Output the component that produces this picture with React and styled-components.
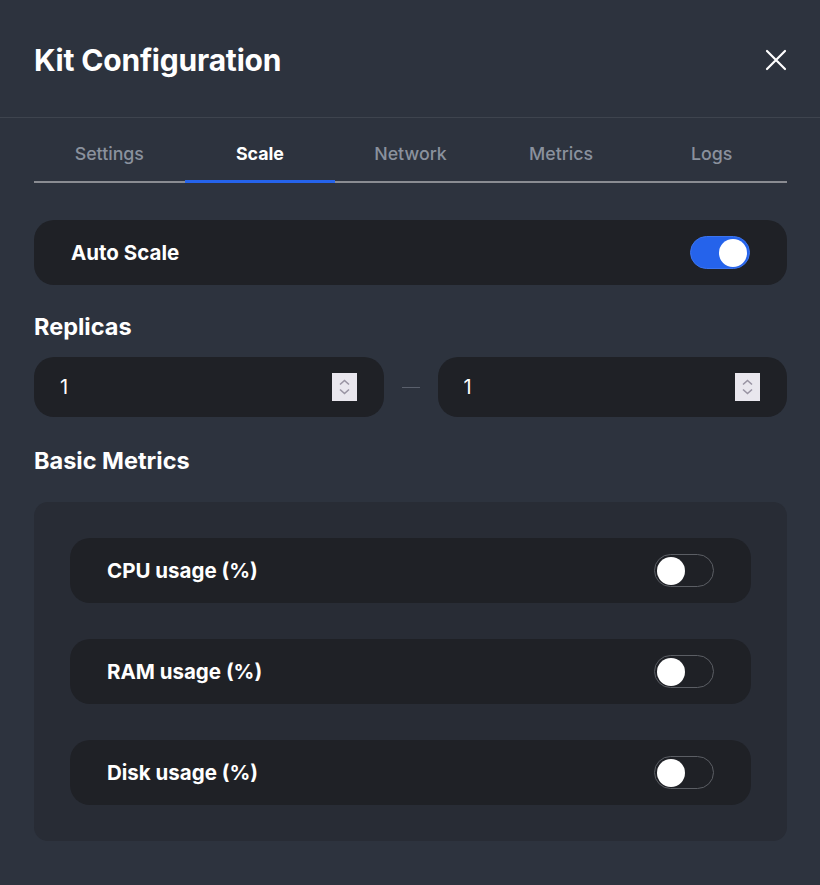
import React, { useState } from "react";
import styled, { createGlobalStyle } from "styled-components";

const Global = createGlobalStyle`
  html, body { margin: 0; padding: 0; background: #2d333e; }
  body { font-family: Inter, "Noto Sans", sans-serif; color: #fff; }
  * { box-sizing: border-box; }
`;

const Panel = styled.div`
  width: 820px;
  min-height: 885px;
  background: #2d333e;
`;

const Header = styled.header`
  height: 118px;
  display: flex;
  align-items: center;
  justify-content: space-between;
  padding: 2px 32px 0 34px;
  border-bottom: 1px solid #3e444e;
`;

const Title = styled.h1`
  margin: 0;
  font-size: 30px;
  font-weight: 700;
  letter-spacing: -0.2px;
  line-height: 38px;
`;

const CloseButton = styled.button`
  background: none;
  border: 0;
  padding: 0;
  width: 24px;
  height: 24px;
  display: flex;
  align-items: center;
  justify-content: center;
  cursor: pointer;
`;

const Body = styled.div`
  padding: 0 33px 0 34px;
`;

const TabList = styled.div`
  margin-top: 12px;
  display: grid;
  grid-template-columns: repeat(5, minmax(0, 1fr));
  border-bottom: 2px solid #8a8c92;
`;

const Tab = styled.button`
  position: relative;
  background: none;
  border: 0;
  padding: 13px 0 16px;
  font-family: inherit;
  font-size: 17.8px;
  line-height: 22px;
  font-weight: ${(p) => (p.$active ? 700 : 500)};
  color: ${(p) => (p.$active ? "#ffffff" : "#8a919d")};
  cursor: pointer;
  &::after {
    content: "";
    position: absolute;
    left: 0;
    right: 0;
    bottom: -2px;
    height: 3px;
    background: ${(p) => (p.$active ? "#2563eb" : "transparent")};
  }
`;

const Card = styled.div`
  height: 65px;
  border-radius: 20px;
  background: #1f2126;
  display: flex;
  align-items: center;
  justify-content: space-between;
  padding: 0 37px 0 37px;
`;

const TopCard = styled(Card)`
  margin-top: 37px;
`;

const CardLabel = styled.span`
  font-size: 20.5px;
  font-weight: 700;
  color: #ffffff;
`;

const SwitchTrack = styled.button`
  width: 60px;
  height: 33px;
  border-radius: 17px;
  padding: 0 2px;
  display: flex;
  align-items: center;
  justify-content: ${(p) => (p.$on ? "flex-end" : "flex-start")};
  background: ${(p) => (p.$on ? "#2563eb" : "transparent")};
  border: 1px solid ${(p) => (p.$on ? "#3b74ef" : "#5b5e64")};
  cursor: pointer;
`;

const Knob = styled.span`
  width: 28px;
  height: 28px;
  border-radius: 50%;
  background: #ffffff;
`;

const SectionTitle = styled.h2`
  margin: ${(p) => p.$top}px 0 ${(p) => p.$bottom}px;
  font-size: 23.5px;
  line-height: 30px;
  font-weight: 700;
  color: #fff;
`;

const RangeRow = styled.div`
  display: grid;
  grid-template-columns: minmax(0, 1fr) 18px minmax(0, 1fr);
  column-gap: 18px;
  align-items: center;
`;

const NumberBox = styled.div`
  height: 60px;
  border-radius: 20px;
  background: #1f2126;
  display: flex;
  align-items: center;
  padding: 0 27px 0 26px;
`;

const NumberInput = styled.input`
  flex: 1;
  width: 0;
  min-width: 0;
  background: transparent;
  border: 0;
  outline: none;
  color: #ffffff;
  font-family: inherit;
  font-size: 20px;
  padding: 0;
  appearance: textfield;
  &::-webkit-inner-spin-button,
  &::-webkit-outer-spin-button {
    -webkit-appearance: none;
    margin: 0;
  }
`;

const Spinner = styled.div`
  flex: none;
  width: 25px;
  height: 28px;
  background: #e9e7ee;
  display: flex;
  align-items: center;
  justify-content: center;
`;

const Dash = styled.div`
  height: 1px;
  background: #5a606c;
`;

const MetricsBox = styled.div`
  margin-top: 26px;
  background: #282c35;
  border-radius: 14px;
  padding: 36px;
  display: flex;
  flex-direction: column;
  gap: 36px;
`;

const Toggle = ({ on, onChange }) => (
  <SwitchTrack $on={on} onClick={onChange} aria-pressed={on}>
    <Knob />
  </SwitchTrack>
);

const tabs = ["Settings", "Scale", "Network", "Metrics", "Logs"];

function NumberField({ value }) {
  return (
    <NumberBox>
      <NumberInput type="number" defaultValue={value} />
      <Spinner>
        <svg width="13" height="20" viewBox="0 0 13 20" fill="none">
          <path d="M2 7.5 L6.5 3.5 L11 7.5" stroke="#9994a3" strokeWidth="1.6" />
          <path d="M2 12.5 L6.5 16.5 L11 12.5" stroke="#9994a3" strokeWidth="1.6" />
        </svg>
      </Spinner>
    </NumberBox>
  );
}

export default function App() {
  const [active, setActive] = useState(1);
  const [auto, setAuto] = useState(true);
  const [metrics, setMetrics] = useState({ cpu: false, ram: false, disk: false });
  const rows = [
    ["cpu", "CPU usage (%)"],
    ["ram", "RAM usage (%)"],
    ["disk", "Disk usage (%)"],
  ];
  return (
    <Panel>
      <Global />
      <Header>
        <Title>Kit Configuration</Title>
        <CloseButton aria-label="Close">
          <svg width="22" height="22" viewBox="0 0 22 22">
            <path d="M2 2 L20 20 M20 2 L2 20" stroke="#fff" strokeWidth="2.2" strokeLinecap="round" />
          </svg>
        </CloseButton>
      </Header>
      <Body>
        <TabList>
          {tabs.map((t, i) => (
            <Tab key={t} $active={i === active} onClick={() => setActive(i)}>
              {t}
            </Tab>
          ))}
        </TabList>
        <TopCard>
          <CardLabel>Auto Scale</CardLabel>
          <Toggle on={auto} onChange={() => setAuto(!auto)} />
        </TopCard>
        <SectionTitle $top={27} $bottom={15}>Replicas</SectionTitle>
        <RangeRow>
          <NumberField value={1} />
          <Dash />
          <NumberField value={1} />
        </RangeRow>
        <SectionTitle $top={29} $bottom={0}>Basic Metrics</SectionTitle>
        <MetricsBox>
          {rows.map(([k, label]) => (
            <Card key={k}>
              <CardLabel>{label}</CardLabel>
              <Toggle on={metrics[k]} onChange={() => setMetrics({ ...metrics, [k]: !metrics[k] })} />
            </Card>
          ))}
        </MetricsBox>
      </Body>
    </Panel>
  );
}
